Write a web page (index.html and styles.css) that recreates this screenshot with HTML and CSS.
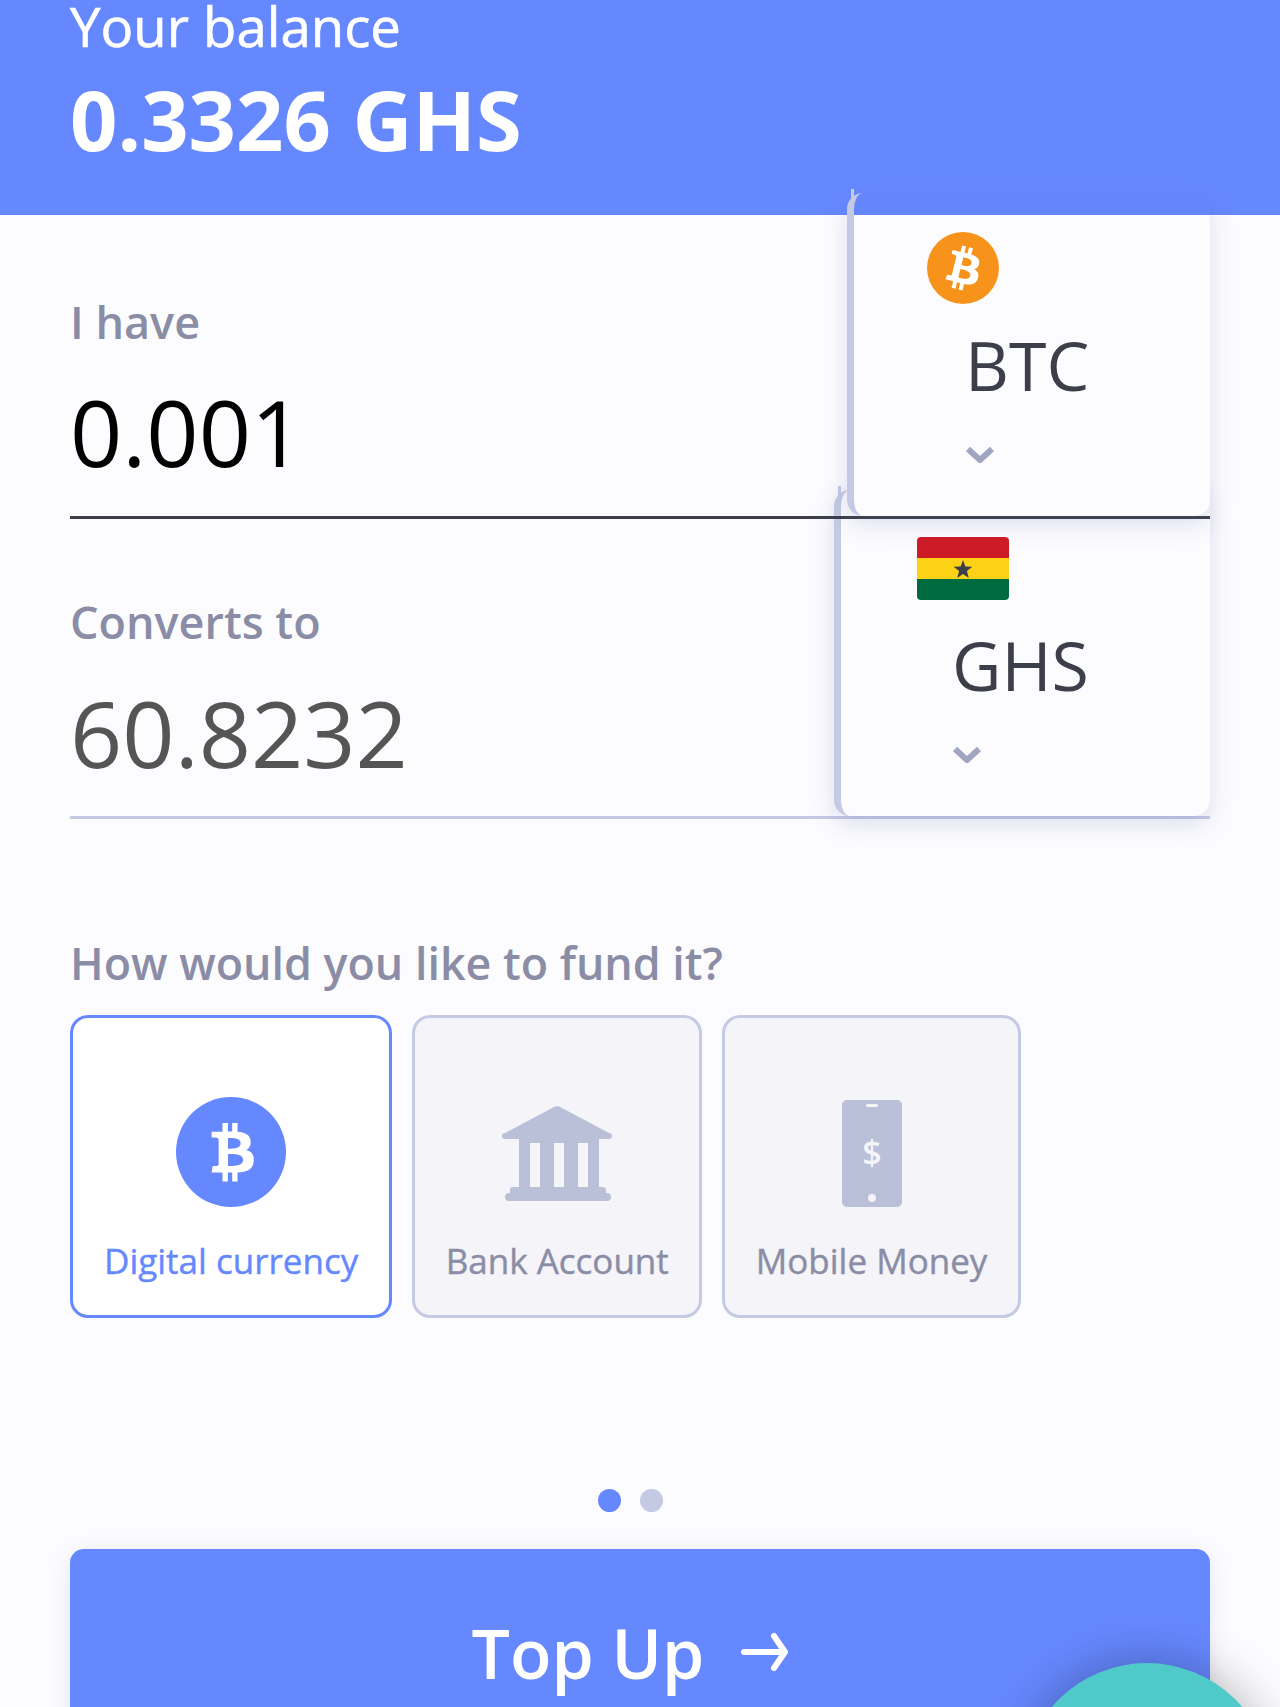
FILE: index.html
```html
<!DOCTYPE html>
<html lang="en">
<head>
    <meta charset="UTF-8">
    <meta name="viewport" content="width=device-width, initial-scale=1.0">
    <title>Top Up</title>
    <link rel="stylesheet" href="styles.css">
</head>
<body>
    <div class="header">
        <p class="balance-label">Your balance</p>
        <p class="balance-value">0.3326 GHS</p>
    </div>

    <div class="content">
        <!-- Amount fields -->
        <div class="field field-have">
            <p class="field-label">I have</p>
            <p class="field-value">0.001</p>
            <div class="select select-btc">
                <svg class="coin" viewBox="0 0 32 32">
                    <circle cx="16" cy="16" r="16" fill="#f7931a"/>
                    <path fill="#fff" d="M23.189 14.02c.314-2.096-1.283-3.223-3.465-3.975l.708-2.84-1.728-.43-.69 2.765c-.454-.114-.92-.22-1.385-.326l.695-2.783L15.596 6l-.708 2.839c-.376-.086-.746-.17-1.104-.26l.002-.009-2.384-.595-.46 1.846s1.283.294 1.256.312c.7.175.826.638.805 1.006l-.806 3.235c.048.012.11.03.18.057l-.183-.045-1.13 4.532c-.086.212-.303.531-.793.41.018.025-1.256-.313-1.256-.313l-.858 1.978 2.25.561c.418.105.828.215 1.231.318l-.715 2.872 1.727.43.708-2.84c.472.127.93.245 1.378.357l-.706 2.828 1.728.43.715-2.866c2.948.558 5.164.333 6.097-2.333.752-2.146-.037-3.385-1.588-4.192 1.13-.26 1.98-1.003 2.207-2.538zm-3.95 5.538c-.533 2.147-4.148.986-5.32.695l.95-3.805c1.172.293 4.929.872 4.37 3.11zm.535-5.569c-.487 1.953-3.495.96-4.47.717l.86-3.45c.975.243 4.118.696 3.61 2.733z"/>
                </svg>
                <p class="select-code">BTC</p>
                <svg class="chevron" viewBox="0 0 30 17"><path d="M3 3l12 11L27 3"/></svg>
            </div>
        </div>

        <div class="field field-to">
            <p class="field-label">Converts to</p>
            <p class="field-value">60.8232</p>
            <div class="select select-ghs">
                <div class="flag">
                    <span class="flag-red"></span>
                    <span class="flag-yellow"></span>
                    <span class="flag-green"></span>
                    <svg class="flag-star" viewBox="0 0 20 20"><polygon points="10,1 12.4,7.5 19.4,7.8 13.9,12.1 15.8,18.9 10,15 4.2,18.9 6.1,12.1 0.6,7.8 7.6,7.5"/></svg>
                </div>
                <p class="select-code">GHS</p>
                <svg class="chevron" viewBox="0 0 30 17"><path d="M3 3l12 11L27 3"/></svg>
            </div>
        </div>

        <p class="fund-title">How would you like to fund it?</p>
        <div class="methods">
            <div class="method active">
                <svg class="method-icon" width="110" height="110" viewBox="0 0 32 32">
                    <circle cx="16" cy="16" r="16" fill="#6688ff"/>
                    <path fill="#fff" transform="translate(16 16) rotate(-14) scale(0.88) translate(-16 -16)" d="M23.189 14.02c.314-2.096-1.283-3.223-3.465-3.975l.708-2.84-1.728-.43-.69 2.765c-.454-.114-.92-.22-1.385-.326l.695-2.783L15.596 6l-.708 2.839c-.376-.086-.746-.17-1.104-.26l.002-.009-2.384-.595-.46 1.846s1.283.294 1.256.312c.7.175.826.638.805 1.006l-.806 3.235c.048.012.11.03.18.057l-.183-.045-1.13 4.532c-.086.212-.303.531-.793.41.018.025-1.256-.313-1.256-.313l-.858 1.978 2.25.561c.418.105.828.215 1.231.318l-.715 2.872 1.727.43.708-2.84c.472.127.93.245 1.378.357l-.706 2.828 1.728.43.715-2.866c2.948.558 5.164.333 6.097-2.333.752-2.146-.037-3.385-1.588-4.192 1.13-.26 1.98-1.003 2.207-2.538zm-3.95 5.538c-.533 2.147-4.148.986-5.32.695l.95-3.805c1.172.293 4.929.872 4.37 3.11zm.535-5.569c-.487 1.953-3.495.96-4.47.717l.86-3.45c.975.243 4.118.696 3.61 2.733z"/>
                </svg>
                <p class="method-name">Digital currency</p>
            </div>
            <div class="method">
                <svg class="method-icon" width="110" height="110" viewBox="0 -9 110 110">
                    <path fill="#b9c0d8" d="M51 1.5q4-3 8 0L107 27a3 3 0 0 1 0 6H3a3 3 0 0 1 0-6z"/>
                    <path fill="#b9c0d8" d="M17 32h80v50H17z"/>
                    <path fill="#f4f4f9" d="M28 37h10v44H28zM52 37h10v44H52zM76 37h10v44H76z"/>
                    <path fill="#b9c0d8" d="M11 81h90a3 3 0 0 1 3 3v3h1a4 4 0 0 1 0 8H7a4 4 0 0 1 0-8h1v-3a3 3 0 0 1 3-3z"/>
                </svg>
                <p class="method-name">Bank Account</p>
            </div>
            <div class="method">
                <svg class="method-icon" width="110" height="110" viewBox="0 0 110 110">
                    <rect fill="#b9c0d8" x="25" y="3" width="60" height="107" rx="5"/>
                    <rect fill="#f4f4f9" x="49" y="7" width="12" height="3" rx="1.5"/>
                    <circle fill="#f4f4f9" cx="55" cy="101" r="4"/>
                    <text class="phone-dollar" x="55" y="68" text-anchor="middle">$</text>
                </svg>
                <p class="method-name">Mobile Money</p>
            </div>
        </div>

        <div class="dots">
            <span class="dot on"></span>
            <span class="dot"></span>
        </div>

        <button class="top-up">
            Top Up
            <svg class="arrow" viewBox="0 0 50 40"><path d="M4 20h41M34 4l11 16-11 16"/></svg>
        </button>
    </div>

    <div class="fab"></div>
</body>
</html>
```
FILE: styles.css
```css
* {
    box-sizing: border-box;
}
html, body {
    margin: 0;
    height: 1707px;
    overflow: hidden;
}
body {
    font-family: "Open Sans", sans-serif;
    background-color: #fcfcff;
    position: relative;
}
p {
    margin: 0;
}
.header {
    height: 215px;
    background-color: #6688ff;
    color: white;
    padding: 0 70px;
}
.balance-label {
    font-size: 54.5px;
    line-height: 52px;
    -webkit-text-stroke: 0.6px white;
}
.balance-value {
    font-size: 83px;
    font-weight: 700;
    line-height: 100px;
    margin-top: 17px;
}
.content {
    padding: 0 70px;
}
.field {
    position: relative;
    height: 300px;
    border-bottom: 3px solid #3c3e4a;
}
.field-have {
    z-index: 2;
    height: 304px;
}
.field-to {
    z-index: 1;
    border-bottom-color: #c5cae4;
}
.field-label {
    font-size: 45px;
    font-weight: 600;
    line-height: 60px;
    color: #8a8da5;
    padding-top: 77px;
    height: 137px;
}
.field-value {
    font-size: 91.5px;
    line-height: 110px;
    color: #000;
    margin-top: 25px;
}
.field-to .field-value {
    color: #555;
    margin-top: 26px;
}
.field-to .field-label {
    padding-top: 73px;
    height: 133px;
}
.select {
    position: absolute;
    right: 0;
    bottom: 0;
    border-left: 7px solid #c5cae4;
    border-radius: 16px;
    box-shadow: 0 8px 24px rgba(90, 100, 160, 0.2);
    padding-left: 112px;
}
.select::before {
    content: "";
    position: absolute;
    left: -3px;
    top: -4px;
    width: 3px;
    height: 24px;
    background-color: #c5cae4;
}
.select-btc {
    left: 777px;
    height: 323px;
    padding-top: 39px;
    background: linear-gradient(rgba(70, 90, 200, 0.05) 22px, #fcfcff 22px);
}
.select-ghs {
    left: 764px;
    height: 326px;
    padding-top: 47px;
    background-color: #fcfcff;
}
.coin {
    display: block;
    width: 72px;
    height: 72px;
    margin-left: -39px;
}
.flag {
    position: relative;
    display: flex;
    flex-direction: column;
    width: 92px;
    height: 63px;
    margin-left: -36px;
    border-radius: 4px;
    overflow: hidden;
}
.flag span {
    flex: 1;
}
.flag-red {
    background-color: #ce1c26;
}
.flag-yellow {
    background-color: #fcd116;
}
.flag-green {
    background-color: #006b3f;
}
.flag-star {
    position: absolute;
    left: 36px;
    top: 22px;
    width: 20px;
    height: 20px;
    fill: #3c3e4a;
}
.select-code {
    font-size: 68px;
    line-height: 90px;
    color: #3c3e4a;
    margin-top: 16px;
    margin-left: -1px;
}
.select-ghs .select-code {
    margin-top: 20px;
}
.chevron {
    display: block;
    width: 30px;
    height: 17px;
    margin-top: 36px;
    margin-left: -1px;
    fill: none;
    stroke: #a0a6c0;
    stroke-width: 6;
}
.fund-title {
    font-size: 44.8px;
    font-weight: 600;
    line-height: 60px;
    color: #8a8da5;
    margin-top: 114px;
}
.methods {
    display: flex;
    gap: 20px;
    margin-top: 22px;
}
.method {
    height: 303px;
    padding: 79px 30.5px 0;
    background-color: #f4f4f9;
    border: 3px solid #c5cae4;
    border-radius: 18px;
    text-align: center;
}
.method.active {
    background-color: #fff;
    border-color: #6688ff;
    padding: 79px 31px 0;
}
.method-icon {
    display: block;
    margin: 0 auto;
}
.phone-dollar {
    font-family: "Open Sans", sans-serif;
    font-size: 34px;
    font-weight: 600;
    fill: #f4f4f9;
}
.method-name {
    font-size: 35px;
    line-height: 50px;
    color: #8a8da5;
    margin-top: 29px;
    white-space: nowrap;
    -webkit-text-stroke: 0.4px #8a8da5;
}
.active .method-name {
    color: #6688ff;
    -webkit-text-stroke-color: #6688ff;
}
.dots {
    display: flex;
    justify-content: center;
    margin-top: 171px;
}
.dot {
    width: 23px;
    height: 23px;
    margin-right: 19px;
    border-radius: 50%;
    background-color: #c5cae4;
}
.dot.on {
    background-color: #6688ff;
}
.top-up {
    display: flex;
    justify-content: center;
    align-items: center;
    gap: 36px;
    width: 100%;
    height: 206px;
    margin-top: 37px;
    padding: 0 18px 0 0;
    border: none;
    border-radius: 14px;
    background-color: #6688ff;
    color: white;
    font-family: inherit;
    font-size: 68px;
    font-weight: 600;
    box-shadow: 0 4px 20px rgba(90, 100, 160, 0.15);
}
.arrow {
    width: 50px;
    height: 40px;
    fill: none;
    stroke: white;
    stroke-width: 6;
    stroke-linecap: round;
    stroke-linejoin: round;
}
.fab {
    position: absolute;
    left: 1022px;
    top: 1663px;
    width: 250px;
    height: 250px;
    border-radius: 50%;
    background-color: #4fc9c9;
    box-shadow: 0 0 50px rgba(0, 0, 0, 0.3);
}
```
